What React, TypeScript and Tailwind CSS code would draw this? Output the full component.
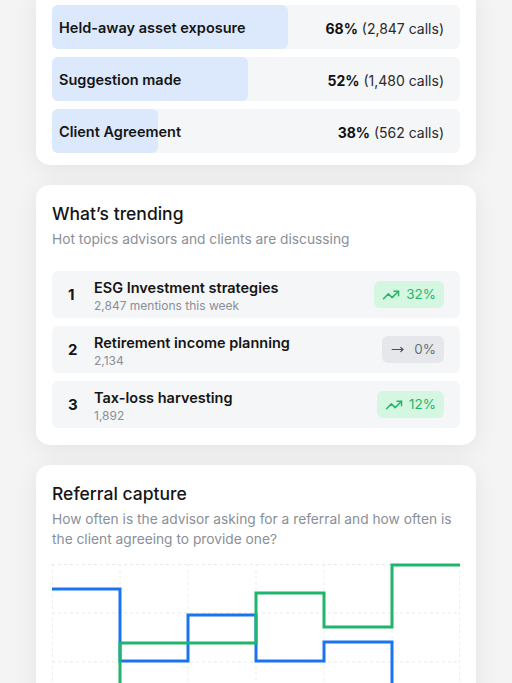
import { TrendingUp, MoveRight } from "lucide-react";

const outcomes = [
  { label: "Held-away asset exposure", pct: "68%", calls: "(2,847 calls)", bar: "w-[236px]" },
  { label: "Suggestion made", pct: "52%", calls: "(1,480 calls)", bar: "w-[196px]" },
  { label: "Client Agreement", pct: "38%", calls: "(562 calls)", bar: "w-[106px]" },
];

const trending = [
  { rank: 1, title: "ESG Investment strategies", sub: "2,847 mentions this week", change: "32%", dir: "up" },
  { rank: 2, title: "Retirement income planning", sub: "2,134", change: "0%", dir: "flat" },
  { rank: 3, title: "Tax-loss harvesting", sub: "1,892", change: "12%", dir: "up" },
];

const cols = [0.5, 68, 136, 204, 272, 340, 407.5];
const rows = [0.5, 49, 98, 147, 196];

function ReferralChart() {
  return (
    <svg width={408} height={200} viewBox="0 0 408 200" className="overflow-visible">
      {/* grid */}
      {rows.map((y) => (
        <line key={"h" + y} x1={0} x2={408} y1={y} y2={y} stroke="#e8eaed" strokeDasharray="3 3" />
      ))}
      {cols.map((x) => (
        <line key={"v" + x} x1={x} x2={x} y1={0} y2={200} stroke="#eceef1" strokeDasharray="3 3" />
      ))}
      {/* advisor asked */}
      <path
        d="M0 25 H68 V97 H136 V51 H204 V97 H272 V78 H340 V160 H408"
        fill="none"
        stroke="#1a74f0"
        strokeWidth={3}
      />
      {/* client agreed */}
      <path
        d="M0 150 H68 V79 H204 V29 H272 V63 H340 V1 H408"
        fill="none"
        stroke="#1fb56d"
        strokeWidth={3}
      />
    </svg>
  );
}

export default function App() {
  return (
    <div className="h-[683px] overflow-hidden bg-[#f4f4f4] px-9 flex flex-col gap-5 font-['Inter',sans-serif] text-[#151515]">
      {/* Outcome funnel card (top cut off) */}
      <div className="-mt-[11px] bg-white rounded-[14px] shadow-[0_4px_24px_rgba(0,0,0,0.07)] px-4 pt-4 pb-3 flex flex-col gap-2">
        {outcomes.map((o) => (
          <div key={o.label} className="relative h-[44px] rounded-md bg-[#f5f6f7] flex items-center justify-between pl-[7px] pr-4 pt-[2px]">
            <div className={`absolute left-0 top-0 bottom-0 rounded-md bg-[#dce9fd] ${o.bar}`} />
            <span className="relative text-[14.5px] font-semibold">{o.label}</span>
            <span className="relative text-[14px] text-[#2a2a2a]">
              <span className="font-bold text-[#111]">{o.pct}</span> {o.calls}
            </span>
          </div>
        ))}
      </div>

      {/* What's trending */}
      <div className="bg-white rounded-[14px] shadow-[0_4px_24px_rgba(0,0,0,0.07)] px-4 pt-[17px] pb-[17px]">
        <h2 className="text-[17.5px] leading-6 font-medium">What’s trending</h2>
        <p className="mt-[3px] text-[13.75px] leading-5 text-[#8a8f98]">Hot topics advisors and clients are discussing</p>
        <div className="mt-[22px] flex flex-col gap-2">
          {trending.map((t) => (
            <div key={t.rank} className="h-[47px] rounded-md bg-[#f5f6f7] flex items-center pl-4 pr-4 pt-[2px]">
              <span className="w-[26px] text-[15px] font-bold">{t.rank}</span>
              <div className="flex-1 flex flex-col">
                <span className="text-[14.5px] leading-5 font-semibold">{t.title}</span>
                <span className="text-[12px] leading-4 text-[#8a8f98]">{t.sub}</span>
              </div>
              {t.dir === "up" ? (
                <span className="h-[27px] -mt-[2px] rounded-md bg-[#d5f7e2] text-[#27b56a] flex items-center gap-[6px] pl-2 pr-2 text-[13.5px]">
                  <TrendingUp size={18} strokeWidth={2} />
                  {t.change}
                </span>
              ) : (
                <span className="h-[27px] -mt-[2px] rounded-md bg-[#e5e7ea] text-[#6b7079] flex items-center gap-[10px] pl-[9px] pr-2 text-[13.5px]">
                  <MoveRight size={13} strokeWidth={2} className="text-[#4a4d52]" />
                  {t.change}
                </span>
              )}
            </div>
          ))}
        </div>
      </div>

      {/* Referral capture */}
      <div className="bg-white rounded-[14px] shadow-[0_4px_24px_rgba(0,0,0,0.07)] px-4 pt-[17px] pb-4">
        <h2 className="text-[17.5px] leading-6 font-medium">Referral capture</h2>
        <p className="mt-[3px] text-[13.75px] leading-5 text-[#8a8f98]">
          How often is the advisor asking for a referral and how often is the client agreeing to provide one?
        </p>
        <div className="mt-[15px]">
          <ReferralChart />
        </div>
      </div>
    </div>
  );
}
